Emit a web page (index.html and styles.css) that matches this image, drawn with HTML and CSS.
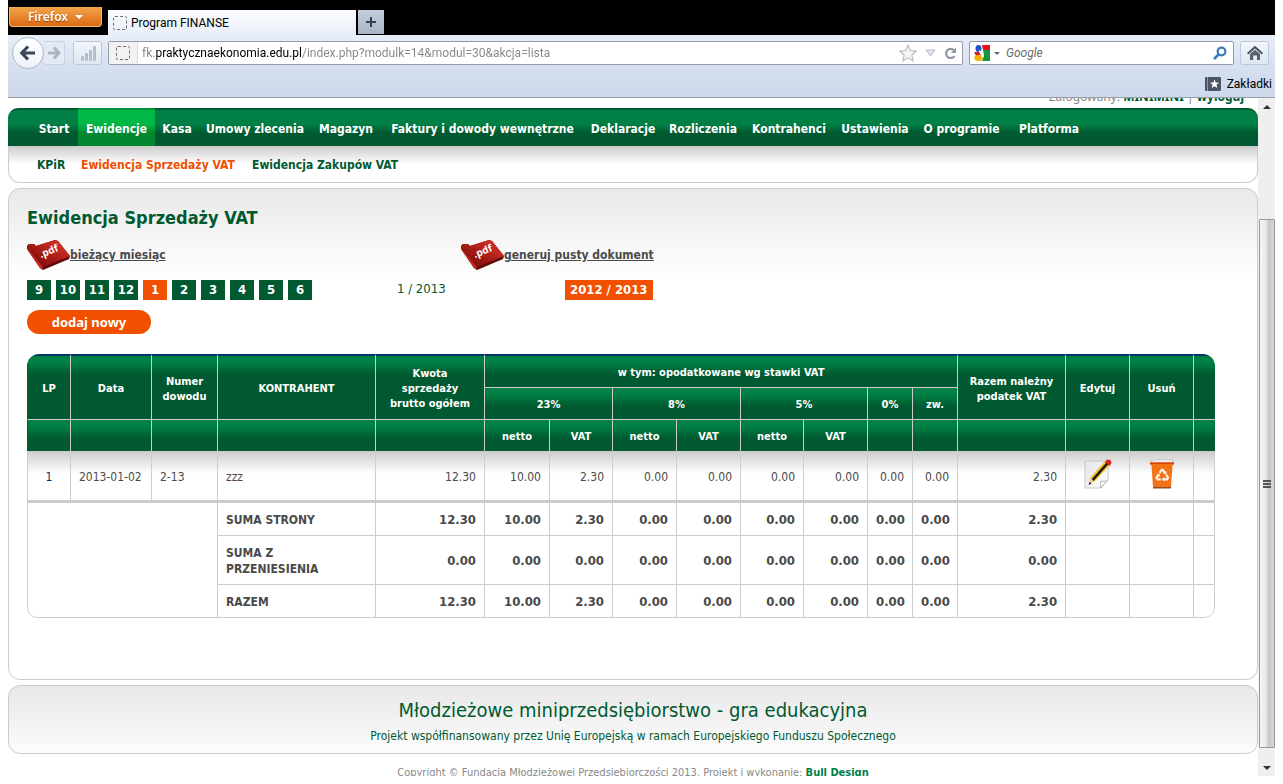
FILE: index.html
```html
<!DOCTYPE html>
<html lang="pl">
<head>
<meta charset="utf-8">
<title>Program FINANSE</title>
<link rel="stylesheet" href="styles.css">
</head>
<body>
<svg class="defs" aria-hidden="true">
  <defs>
    <linearGradient id="folder" x1="0" y1="1" x2="1" y2="0"><stop offset="0" stop-color="#6d0a08"/><stop offset=".45" stop-color="#a51a14"/><stop offset="1" stop-color="#e63a2c"/></linearGradient>
    <linearGradient id="paper" x1="0" y1="0" x2="1" y2="1"><stop offset="0" stop-color="#e2e4e6"/><stop offset="1" stop-color="#fff"/></linearGradient>
    <symbol id="pdf" viewBox="0 0 43 30">
      <path d="M0 6 L2 4 L7 4 L9 6 L28 0 L31 1 L43 16 L42 19 L16 30 L13 28 L0 9z" fill="#5f0807"/>
      <path d="M0 6 L2 4 L7 4 L9 6 L28 0 L31 1 L43 16 L16 27z" fill="url(#folder)"/>
      <path d="M0 7 L16 27 L15 29 L13 28 L0 9z" fill="#c5241b"/>
      <text x="14" y="18" transform="rotate(-22 14 18)" fill="#fff" class="pdf-text">.pdf</text>
    </symbol>
  </defs>
</svg>
<div class="window">
  <header class="titlebar">
    <button class="firefox" type="button">Firefox <i class="caret"></i></button>
    <div class="tab"><i class="blank-icon"></i>Program FINANSE</div>
    <button class="newtab" type="button" aria-label="Nowa karta"><svg width="12" height="12" viewBox="0 0 12 12"><path d="M6 1v10M1 6h10" stroke="#37424f" stroke-width="2"/></svg></button>
  </header>
  <div class="toolbar">
    <div class="history">
      <button class="back" type="button" aria-label="Wstecz"><svg width="18" height="18" viewBox="0 0 18 18"><path d="M9 2.500L2.800 9L9 15.500M3 9h13" fill="none" stroke="#3a4654" stroke-width="3.200"/></svg></button>
      <button class="forward" type="button" aria-label="Dalej"><svg width="14" height="14" viewBox="0 0 14 14"><path d="M7 1.500L12 7L7 12.500M1 7h10.500" fill="none" stroke="#a9b4c1" stroke-width="2.800"/></svg></button>
    </div>
    <button class="tool stats" type="button" aria-label="Statystyki"><svg width="16" height="16" viewBox="0 0 16 16" fill="#b3bfcd"><rect x="1" y="11" width="3" height="5" rx="1"/><rect x="5" y="8" width="3" height="8" rx="1"/><rect x="9" y="5" width="3" height="11" rx="1"/><rect x="13" y="1" width="3" height="15" rx="1"/></svg></button>
    <div class="field url">
      <span class="identity"><i class="blank-icon"></i></span>
      <input class="address" type="text" aria-label="Adres" value="fk.praktycznaekonomia.edu.pl/index.php?modulk=14&amp;modul=30&amp;akcja=lista">
      <svg width="18" height="18" viewBox="0 0 16 16"><path d="M8 1l2.100 4.800 5.200.5-3.900 3.500 1.100 5.200L8 12.300 3.500 15l1.100-5.200L.7 6.300l5.200-.5z" fill="#f4f4f4" stroke="#b9b9b9"/></svg>
      <svg width="11" height="8" viewBox="0 0 11 8"><path d="M1 1h9L5.500 7z" fill="#dfe4ea" stroke="#b5bcc5"/></svg>
      <svg width="13" height="13" viewBox="0 0 13 13"><path d="M10.500 9A4.600 4.600 0 1 1 10 3.200" fill="none" stroke="#8d98a6" stroke-width="2.200"/><path d="M12 .5v5.500H6.800z" fill="#8d98a6"/></svg>
    </div>
    <div class="field search">
      <svg width="16" height="16" viewBox="0 0 16 16"><rect width="16" height="16" fill="#fff"/><path d="M8 0h8v5H9z" fill="#e8101a"/><path d="M9 5h7v11H8l2-5z" fill="#159540"/><path d="M0 7h5l2 3-5 1z" fill="#d5202a"/><ellipse cx="4.500" cy="3.500" rx="3" ry="3.500" fill="#1a56c4"/><ellipse cx="4.500" cy="13" rx="4.300" ry="2.900" fill="#f4b400"/><path d="M5 6c4 1 5 4 3 6" stroke="#fff" stroke-width="1.600" fill="none"/></svg>
      <i class="caret dark"></i>
      <input class="query" type="text" aria-label="Szukaj" placeholder="Google">
      <svg width="14" height="14" viewBox="0 0 14 14"><circle cx="8.500" cy="5.500" r="3.900" fill="none" stroke="#3d78b8" stroke-width="2.200"/><path d="M5.800 8.300L1 13" stroke="#3d78b8" stroke-width="2.600"/></svg>
    </div>
    <button class="tool home" type="button" aria-label="Strona startowa"><svg width="16" height="16" viewBox="0 0 16 16"><path d="M8 .8L16 8l-1.200 1.400L8 3.500 1.200 9.400 0 8z" fill="#454f5c"/><path d="M8 4.700l5 4.400V15h-3v-4.500H6.200V15H3V9.100z" fill="#566270"/></svg></button>
  </div>
  <div class="bookmarks">
    <button class="bookmark" type="button"><svg width="16" height="14" viewBox="0 0 16 14"><rect width="16" height="14" rx="1" fill="#4a5665"/><path d="M2.500 0v14" stroke="#8b96a3"/><path d="M9.500 2.500l1.200 3 3.300.2-2.500 2.100.8 3.200-2.800-1.800L6.700 11l.8-3.200L5 5.700l3.300-.2z" fill="#fff"/></svg>Zakładki</button>
  </div>
  <div class="viewport">
    <div class="page">
      <div class="login">Zalogowany: <b>MINIMINI</b> | <a href="#">wyloguj</a></div>
      <nav class="menu">
        <a href="#">Start</a><a href="#" class="active">Ewidencje</a><a href="#">Kasa</a><a href="#">Umowy zlecenia</a><a href="#">Magazyn</a><a href="#">Faktury i dowody wewnętrzne</a><a href="#">Deklaracje</a><a href="#">Rozliczenia</a><a href="#">Kontrahenci</a><a href="#">Ustawienia</a><a href="#">O programie</a><a href="#">Platforma</a>
      </nav>
      <nav class="submenu">
        <a href="#">KPiR</a><a href="#" class="active">Ewidencja Sprzedaży VAT</a><a href="#">Ewidencja Zakupów VAT</a>
      </nav>
      <main class="panel">
        <h1>Ewidencja Sprzedaży VAT</h1>
        <div class="documents">
          <a href="#"><svg width="43" height="30"><use href="#pdf"/></svg>bieżący miesiąc</a>
          <a href="#"><svg width="43" height="30"><use href="#pdf"/></svg>generuj pusty dokument</a>
        </div>
        <div class="period">
          <div class="months">
            <a href="#">9</a><a href="#">10</a><a href="#">11</a><a href="#">12</a><a href="#" class="active">1</a><a href="#">2</a><a href="#">3</a><a href="#">4</a><a href="#">5</a><a href="#">6</a>
          </div>
          <span class="current">1 / 2013</span>
          <div class="years"><a href="#">2012 / 2013</a></div>
        </div>
        <button class="add" type="button">dodaj nowy</button>
        <table class="register">
          <colgroup><col class="c-lp"><col class="c-date"><col class="c-no"><col class="c-name"><col class="c-gross"><col class="c-first"><col class="c-slim"><col class="c-val"><col class="c-val"><col class="c-slim"><col class="c-val"><col class="c-rate"><col class="c-rate"><col class="c-due"><col class="c-val"><col class="c-val"><col class="c-end"></colgroup>
          <thead>
            <tr><th rowspan="2">LP</th><th rowspan="2">Data</th><th rowspan="2">Numer dowodu</th><th rowspan="2">KONTRAHENT</th><th rowspan="2">Kwota sprzedaży brutto ogółem</th><th colspan="8">w tym: opodatkowane wg stawki VAT</th><th rowspan="2">Razem należny podatek VAT</th><th rowspan="2">Edytuj</th><th rowspan="2">Usuń</th><th rowspan="2"></th></tr>
            <tr><th colspan="2">23%</th><th colspan="2">8%</th><th colspan="2">5%</th><th>0%</th><th>zw.</th></tr>
            <tr><th></th><th></th><th></th><th></th><th></th><th>netto</th><th>VAT</th><th>netto</th><th>VAT</th><th>netto</th><th>VAT</th><th></th><th></th><th></th><th></th><th></th><th></th></tr>
          </thead>
          <tbody>
            <tr><td class="lp">1</td><td class="text">2013-01-02</td><td class="text">2-13</td><td class="text">zzz</td><td>12.30</td><td>10.00</td><td>2.30</td><td>0.00</td><td>0.00</td><td>0.00</td><td>0.00</td><td>0.00</td><td>0.00</td><td>2.30</td>
              <td class="action"><button type="button" aria-label="Edytuj"><svg width="28" height="30" viewBox="0 0 28 30"><path d="M1 2h23v19l-7 8H1z" fill="url(#paper)" stroke="#c4c6c8"/><path d="M16 29c1-3 0-5 1-7 3 1 5 0 7-1z" fill="#fff" stroke="#b5b7b9"/><path d="M5 25l1-6L21 2l5 4L11 22z" fill="#f2c12e"/><path d="M7.500 20.500L22.500 3.500l2 1.500L9.500 22z" fill="#1d1a12"/><path d="M5 25l1-6 2 1 1 2 2 0z" fill="#e9cf9c"/><path d="M4.500 26l1-3 2 1.500z" fill="#222"/><path d="M21 3l2-2.500 3.500.5 1 3L25.500 7z" fill="#d8221d"/></svg></button></td>
              <td class="action"><button type="button" aria-label="Usuń"><svg width="24" height="30" viewBox="0 0 24 30"><path d="M1 4l0-3 3 1 2-2 3 1 3-1 3 1 3-1 2 1 3 0 0 3z" fill="#eceef0" stroke="#b9bcc0" stroke-width=".8"/><path d="M0 3.500h24v2l-1.500 1-1.500 22H3L1.500 6.500 0 5.500z" fill="#f47216"/><path d="M0 3.500h24v1.500H0z" fill="#d9480a"/><path d="M3 28h18v1.500H3z" fill="#9a4a22"/><g fill="none" stroke="#fff3e8" stroke-width="2.200"><path d="M9.500 14l2.200-3.200h1.200l2 3"/><path d="M16.300 15.700l1.700 3-1 1.600h-3.500"/><path d="M10.800 20.300H7.500l-1-1.600 1.700-3"/></g><path d="M16.500 12v3.700l-3.300-1.500zM14.300 17.900v4.500L11.700 20.200zM6.500 14.700l3.400.4-.4 3.200z" fill="#fff3e8"/></svg></button></td>
              <td></td></tr>
          </tbody>
          <tfoot>
            <tr><td colspan="3" rowspan="3" class="corner-left"></td><td class="text">SUMA STRONY</td><td>12.30</td><td>10.00</td><td>2.30</td><td>0.00</td><td>0.00</td><td>0.00</td><td>0.00</td><td>0.00</td><td>0.00</td><td>2.30</td><td></td><td></td><td></td></tr>
            <tr><td class="text">SUMA Z<br>PRZENIESIENIA</td><td>0.00</td><td>0.00</td><td>0.00</td><td>0.00</td><td>0.00</td><td>0.00</td><td>0.00</td><td>0.00</td><td>0.00</td><td>0.00</td><td></td><td></td><td></td></tr>
            <tr><td class="text">RAZEM</td><td>12.30</td><td>10.00</td><td>2.30</td><td>0.00</td><td>0.00</td><td>0.00</td><td>0.00</td><td>0.00</td><td>0.00</td><td>2.30</td><td></td><td></td><td></td></tr>
          </tfoot>
        </table>
      </main>
      <footer>
        <div class="project">
          <p class="project-name">Młodzieżowe miniprzedsiębiorstwo - gra edukacyjna</p>
          <p class="project-note">Projekt współfinansowany przez Unię Europejską w ramach Europejskiego Funduszu Społecznego</p>
        </div>
        <p class="copyright">Copyright © Fundacja Młodzieżowej Przedsiębiorczości 2013. Projekt i wykonanie: <a href="#">Bull Design</a></p>
      </footer>
    </div>
    <div class="scrollbar" aria-hidden="true">
      <i class="arrow up"></i>
      <i class="thumb"><i class="grip"></i></i>
      <i class="arrow down"></i>
    </div>
  </div>
</div>
</body>
</html>
```
FILE: styles.css
```css
* { box-sizing: border-box; }
body {
  margin: 0;
  background: #fff;
  color: #4a4a4a;
  font: 12px/16px "Noto Sans", "Open Sans", sans-serif;
}
button { border: 0; padding: 0; background: none; font: inherit; color: inherit; }
svg { display: block; flex: none; }
p, h1 { margin: 0; }
.defs { position: absolute; width: 0; height: 0; }

.window { display: flex; flex-direction: column; height: 100vh; padding: 0 8px 8px; }

/* Browser frame */
.titlebar { display: flex; align-items: flex-start; height: 35px; background: #000; }
.firefox {
  display: flex; align-items: center; justify-content: center; gap: 7px;
  width: 93px; height: 20px; margin: 7px 6px 0 1px;
  border: 1px solid #f4b878; border-top: 0; border-radius: 0 0 4px 4px;
  background: linear-gradient(#f2a54b, #dc6a15);
  color: #fff; font-weight: 600; text-shadow: 0 1px 1px #8a4208;
}
.caret { border: 4px solid transparent; border-top-color: #fff; border-bottom: 0; }
.caret.dark { border-width: 3px; border-bottom: 0; border-top-color: #6b6b6b; }
.tab {
  display: flex; align-items: center; gap: 4px;
  width: 248px; height: 25px; margin-top: 10px; padding-left: 5px;
  background: linear-gradient(#fafcff, #e8eef8); color: #000;
  font-family: Roboto, sans-serif;
}
.blank-icon { width: 14px; height: 14px; border: 1px dashed #6f6f6f; border-radius: 2px; }
.newtab {
  display: flex; align-items: center; justify-content: center;
  width: 26px; height: 24px; margin: 10px 0 0 2px;
  background: linear-gradient(#c3cedc, #a9b5c6);
}
.toolbar {
  display: flex; align-items: center;
  height: 36px; padding: 0 6px 0 4px;
  background: linear-gradient(#e8eef8, #d4deee);
}
.history { display: flex; align-items: center; margin-right: 8px; }
.back {
  display: flex; align-items: center; justify-content: center;
  width: 32px; height: 32px; border: 1px solid #b0bac8; border-radius: 50%;
  background: linear-gradient(#fff, #eef2f8);
}
.forward {
  display: flex; align-items: center; justify-content: center;
  width: 21px; height: 24px; border: 1px solid #c9d3e2; border-left: 0; border-radius: 0 3px 3px 0;
  background: #e3eaf5;
}
.tool {
  display: flex; align-items: center; justify-content: center;
  width: 29px; height: 24px; border: 1px solid #bcc7d7; border-radius: 3px;
  background: linear-gradient(#f3f6fb, #dfe7f3);
}
.stats { margin-right: 6px; }
.home { margin-left: 6px; }
.field {
  display: flex; align-items: center;
  height: 24px; border: 1px solid #959ca7; border-radius: 2px; background: #fff;
}
.field input { flex: 1; min-width: 0; height: 20px; padding: 0; border: 0; outline: 0; background: none; font: inherit; }
.url { flex: 1; gap: 8px; padding-right: 5px; margin-right: 6px; }
.identity {
  display: flex; align-items: center; justify-content: center;
  width: 29px; height: 22px; margin-right: -4px; border-right: 1px solid #dcdcdc; background: #f2f2f2;
}
.field .address {
  background: linear-gradient(90deg, #858585 13px, #000 13px, #000 160px, #858585 160px);
  -webkit-background-clip: text; background-clip: text;
  -webkit-text-fill-color: transparent;
  font-family: Roboto, sans-serif;
}
.search { flex: 0 1 265px; gap: 6px; padding: 0 6px 0 4px; }
.search svg:first-child { margin-right: -2px; }
.field .query { font-style: italic; font-family: Roboto, sans-serif; }
.query::placeholder { color: #6b6b6b; }
.bookmarks {
  display: flex; justify-content: flex-end;
  height: 27px; padding-right: 3px;
  border-bottom: 1px solid #989fab; background: linear-gradient(#d4deee, #cdd9eb);
}
.bookmark { display: flex; align-items: center; gap: 6px; color: #000; font-family: Roboto, sans-serif; }

/* Page */
.viewport { display: flex; flex: 1; min-height: 0; overflow: hidden; }
.page {
  flex: 1; min-width: 0; margin-top: -9px;
  font-family: "DejaVu Sans Condensed", "DejaVu Sans", sans-serif;
}
.login {
  padding-right: 14px; margin-bottom: 3px; text-align: right; color: #888;
  font-family: "Noto Sans", sans-serif;
}
.login b, .login a { color: #005930; font-weight: bold; text-decoration: none; }
.menu {
  display: grid;
  grid-template-columns: 48px 77px 44px 112px 70px 203px 78px 82px 90px 82px 91px 84px;
  height: 38px; padding-left: 22px;
  border-top: 2px solid #005930; border-radius: 10px 10px 0 0;
  background: linear-gradient(#008045 14px, #005930 23px);
}
.menu a {
  display: flex; align-items: center; justify-content: center;
  margin-top: -2px; padding-top: 4px;
  color: #fff; font-weight: bold; text-decoration: none; white-space: nowrap;
}
.menu .active { border-top: 2px solid #00913a; padding-top: 2px; background: linear-gradient(#00b844 14px, #00872f 23px); }
.submenu {
  display: grid; grid-template-columns: 44px 171px 1fr;
  height: 37px; padding: 11px 29px 0 28px;
  border: 1px solid #ccc; border-top: 0; border-radius: 0 0 12px 12px;
  background: linear-gradient(#ccc, #fff 18px);
}
.submenu a { color: #005930; font-weight: bold; text-decoration: none; }
.submenu .active { color: #f05000; }
.panel {
  margin-top: 5px; padding: 16px 42px 61px 18px;
  border: 1px solid #ccc; border-radius: 12px;
  background: linear-gradient(#e9e9e9, #fff 90px);
}
h1 { color: #005930; font-size: 18px; line-height: 26px; }
.documents { display: grid; grid-template-columns: 434px 1fr; margin: 9px 0 10px; }
.documents a { display: flex; align-items: center; color: #4a4a4a; font-weight: bold; }
.pdf-text { font: bold 10px "Open Sans", sans-serif; }
.period { display: grid; grid-template-columns: 370px 168px 1fr; }
.months, .years { display: flex; gap: 5px; }
.months a, .years a {
  min-width: 24px;
  background: #005930; color: #fff;
  font-size: 13px; font-weight: bold; line-height: 20px; text-align: center; text-decoration: none;
}
.years a { padding: 0 5px; }
.months .active, .years a { background: #f05000; }
.current { color: #005930; font-size: 13px; line-height: 18px; }
.add {
  display: block; width: 124px; height: 24px; margin: 10px 0 20px;
  border-radius: 12px; background: #f05000; color: #fff;
  font-family: "Noto Sans", sans-serif; font-size: 13px; font-weight: bold;
}

.register {
  width: 100%; table-layout: fixed; border-collapse: separate; border-spacing: 0;
  border-radius: 12px 12px 10px 10px; overflow: hidden;
}
.c-lp { width: 43px; }
.c-date { width: 81px; }
.c-no { width: 66px; }
.c-name { width: 158px; }
.c-gross { width: 109px; }
.c-first { width: 65px; }
.c-slim { width: 63px; }
.c-val { width: 64px; }
.c-rate { width: 45px; }
.c-due { width: 108px; }
.c-end { width: 22px; }
.register th {
  height: 32px; padding: 2px 8px 0;
  border: solid #ccc; border-width: 1px 0 0 1px;
  background: linear-gradient(#008045 6px, #005930 19px);
  color: #fff; font-size: 11px; line-height: 15px;
}
.register thead tr:first-child th { height: 33px; border-top: 2px solid #003366; }
.register th:first-child { border-left-color: #005930; }
.register thead tr:nth-child(2) th:first-child { border-left-color: #ccc; }
.register td {
  height: 33px; padding: 2px 8px 0;
  border: solid #ccc; border-width: 1px 0 0 1px;
  text-align: right;
}
.register td:last-child { border-right-width: 1px; }
.register tbody td { height: 49px; border-top: 0; background: linear-gradient(#ccc, #fff 23px); }
.register td.lp { text-align: center; color: #003366; }
.register td.text { text-align: left; }
.register td.action { padding: 0 0 4px; }
.action button { display: block; margin: 0 auto; }
.register tfoot td { font-size: 13px; font-weight: bold; }
.register tfoot tr:first-child td { height: 35px; border-top-width: 3px; }
.register tfoot tr:nth-child(2) td { height: 49px; }
.register tfoot tr:last-child td { height: 34px; border-bottom-width: 1px; }
.register tfoot .text { font-size: 12px; }
.register tfoot tr td.corner-left { border-bottom-width: 1px; border-bottom-left-radius: 10px; }
.register tfoot tr:last-child td:last-child { border-bottom-right-radius: 10px; }

.project {
  margin-top: 5px; padding: 10px 0 5px;
  border: 1px solid #ccc; border-radius: 12px;
  background: linear-gradient(#e8e8e8, #fcfcfc);
  color: #005930; text-align: center;
}
.project-name { font-size: 20px; line-height: 28px; }
.project-note { line-height: 24px; }
.copyright { margin-top: 11px; color: #888; font-size: 11px; text-align: center; }
.copyright a { color: #008045; font-weight: bold; }

.scrollbar {
  display: grid; grid-template-rows: 17px 104fr 529fr 11fr 17px;
  width: 17px; padding-left: 1px; background: #efefef;
}
.arrow { place-self: center; border: 4px solid transparent; }
.up { grid-row: 1; border-top: 0; border-bottom-color: #333; }
.down { grid-row: 5; border-bottom: 0; border-top-color: #333; }
.thumb {
  display: grid; place-items: center; grid-row: 3;
  border: 1px solid #979797; border-radius: 1px;
  background: linear-gradient(90deg, #f6f6f6, #e6e6ea 45%, #c6c6cb 60%, #d8d8dc);
}
.grip { width: 8px; height: 8px; background: repeating-linear-gradient(#555 0 2px, transparent 2px 3px); }
```
